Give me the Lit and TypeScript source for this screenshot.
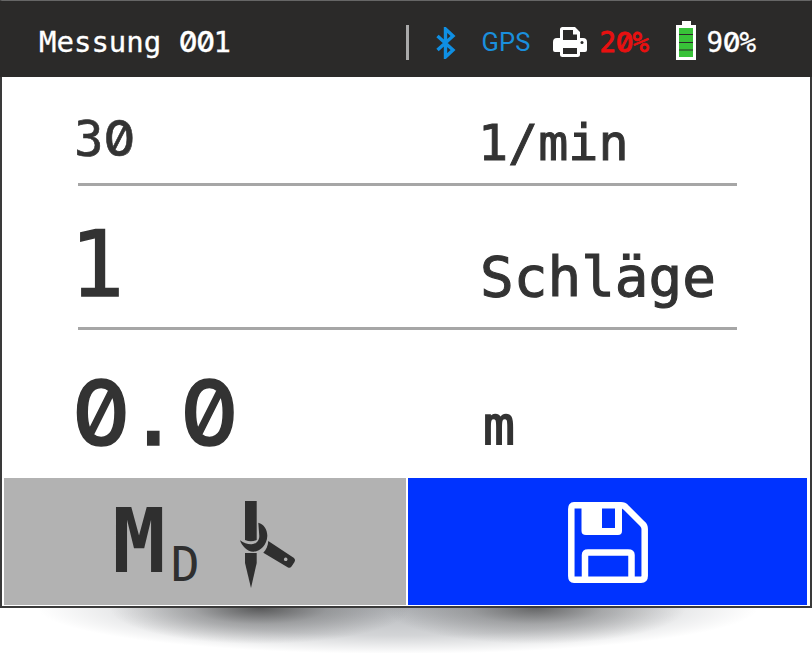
import { LitElement, html, css, svg } from "lit";
import { customElement } from "lit/decorators.js";

const bluetooth = svg`<svg class="bt" width="22" height="32" viewBox="0 0 22 32"><path d="M2.5 9 L18 23 L10.500 30 V2 L18 9 L2.500 23" fill="none" stroke="#0f8fe3" stroke-width="3.4"/></svg>`;

const printer = svg`<svg class="pr" width="34" height="30" viewBox="0 0 34 30">
<path fill-rule="evenodd" fill="#fff" d="M7 2.5 A2.5 2.5 0 0 1 9.5 0 H22 L27 5 V11 H30 A4 4 0 0 1 34 15 V23 A2 2 0 0 1 32 25 H27 V27.5 A2.5 2.5 0 0 1 24.5 30 H9.5 A2.5 2.5 0 0 1 7 27.5 V25 H2 A2 2 0 0 1 0 23 V15 A4 4 0 0 1 4 11 H7 Z M10 3 V13 H24 V7.5 H20 V3 Z M10 21 V27 H24 V21 Z"/>
<circle cx="29" cy="15.5" r="1.5" fill="#2b2a29"/></svg>`;

const battery = svg`<svg class="bat" width="20" height="39" viewBox="0 0 20 39">
<path fill="#fff" d="M6 0 H15 V4 H20 V39 H0 V4 H6 Z"/>
<rect x="3" y="7" width="14" height="29" fill="#2b2a29"/>
<rect x="3" y="7" width="14" height="6" fill="#38c238"/>
<rect x="3" y="14" width="14" height="7" fill="#38c238"/>
<rect x="3" y="22" width="14" height="6.5" fill="#38c238"/>
<rect x="3" y="29.5" width="14" height="6.5" fill="#38c238"/></svg>`;

const needle = svg`<svg class="ndl" width="60" height="90" viewBox="0 0 60 90">
<g fill="#2f2f2f">
<path d="M7 2 H18.700 V41 Q13 43.500 7 41 Z"/>
<path d="M7 54 H18.700 V64 L13 89 L7 64 Z"/>
<path d="M20.300 23.700 C26 25 29.500 31 29.300 37 C29 46 22 52.700 15.300 52.700 C9 52.700 4 47 2 41.300 C6 44.500 10 45.500 13.700 45.300 C18 45 21.300 42 21.300 37 Z"/>
<path fill-rule="evenodd" d="M30.300 42 L56 59 Q58 61 56.500 63 L53.500 67.500 Q52 69.500 50 68.500 L25.300 53.700 C28 51 30 47 30.300 42 Z M47.700 58.500 a1.800 1.800 0 1 0 0.010 0 Z"/>
</g></svg>`;

const save = svg`<svg class="sv" width="80" height="81" viewBox="0 0 80 81">
<path fill="none" stroke="#fff" stroke-width="6.5" stroke-linejoin="round" d="M6 3.3 H53 Q56 3.3 58 5.5 L74.5 22 Q76.7 24 76.7 27 V74 Q76.7 77.7 73 77.7 H6 Q3.3 77.7 3.3 74 V7 Q3.3 3.3 6 3.3 Z"/>
<path fill="#fff" fill-rule="evenodd" d="M13.5 5 H54 V29 Q54 33 50 33 H18 Q13.5 33 13.5 29 Z M34 6 V26 H47 V6 Z"/>
<path fill="none" stroke="#fff" stroke-width="6.5" d="M17 76 V53 Q17 50.500 20 50.500 H60 Q63.500 50.500 63.500 53 V76"/>
</svg>`;

const digits = (s: string) =>
  [...s].map((c) => (c === "0" ? html`<span class="z">0</span>` : c));

@customElement("app-root")
export class AppRoot extends LitElement {
  static styles = css`
    :host { display: block; width: 812px; height: 653px; overflow: hidden; background: #fff; font-family: "DejaVu Sans Mono", monospace; color: #333; }
    .z { display: inline-block; width: 0.602em; text-align: center; font-family: Inter, sans-serif; font-weight: 500; font-feature-settings: "zero", "tnum"; }
    .frame { width: 812px; height: 608px; box-sizing: border-box; border: 2px solid #3a3a3a; border-top: 1px solid #666; display: flex; flex-direction: column; background: #fff; }
    .head { height: 76px; background: #2b2a29; margin: 0 -2px; display: flex; align-items: center; color: #fff; flex: none; }
    .title { font-size: 29px; margin-left: 39px; width: 366px; white-space: pre; -webkit-text-stroke: 0.3px #fff; position: relative; top: 2px; }
    .sep { width: 2.500px; height: 35px; background: #aaa; margin-left: 1px; margin-top: 7px; }
    .bt { margin-left: 26px; margin-top: 7px; }
    .gps { font-family: Roboto, sans-serif; font-size: 25.500px; color: #1a8fdc; margin-left: 25px; width: 45px; letter-spacing: 0.200px; margin-top: 6px; }
    .pr { margin-left: 26px; margin-top: 5px; }
    .pct { font-size: 27.500px; letter-spacing: -0.200px; margin-top: 6px; }
    .red { color: #e81010; -webkit-text-stroke: 0.8px #e81010; margin-left: 13px; width: 76px; }
    .bat { margin-top: 2px; }
    .pct.white { margin-left: 11px; -webkit-text-stroke: 0.3px #fff; }
    .main { flex: 1; display: flex; flex-direction: column; padding: 0 73px 0 76px; }
    .row { display: grid; grid-template-columns: 405px 1fr; align-items: end; box-sizing: border-box; border-bottom: 3px solid #a6a6a6; white-space: pre; }
    .r1 { height: 109px; } .r2 { height: 144px; } .r3 { height: 148px; border-bottom: none; }
    .v1 { font-size: 49px; line-height: 50px; margin: 0 0 18px -4px; -webkit-text-stroke: 0.6px #333; }
    .u1 { font-size: 50px; line-height: 50px; margin: 0 0 15px -5px; -webkit-text-stroke: 1px #333; }
    .v2 { font-size: 90px; line-height: 100px; margin: 0 0 12px -8px; -webkit-text-stroke: 1.500px #333; }
    .u2 { font-size: 56px; line-height: 60px; margin: 0 0 20px -3px; -webkit-text-stroke: 1.100px #333; }
    .r3 .v2 { margin: 0 0 14px -6px; }
    .r3 .u2 { margin: 0 0 22px 0; font-size: 53px; -webkit-text-stroke: 1.500px #333; }
    .foot { flex: 1; display: grid; grid-template-columns: 402px 1fr; gap: 2px; padding: 0 3px 1px 2px; }
    .btn { display: flex; align-items: center; justify-content: center; }
    .gray { background: #b2b2b2; color: #2f2f2f; gap: 40px; }
    .blue { background: #0033ff; }
    .md { font-weight: 700; font-size: 89px; line-height: 1; display: flex; align-items: baseline; }
    .md sub { font-weight: 400; font-size: 48px; vertical-align: baseline; position: relative; top: 9px; margin-left: 5px; }
    .ndl { display: block; margin-top: 4px; margin-left: -2px; }
    .sv { display: block; margin-top: 2px; }
    .needle { display: flex; }
    .shadow { height: 45px; background:
      radial-gradient(ellipse 150px 36px at 32% 0, rgba(40,40,40,.7), rgba(40,40,40,.28) 45%, rgba(40,40,40,0) 100%),
      radial-gradient(ellipse 150px 36px at 66% 0, rgba(40,40,40,.62), rgba(40,40,40,.25) 45%, rgba(40,40,40,0) 100%),
      radial-gradient(ellipse 360px 46px at 49% 0, rgba(110,115,122,.5), rgba(110,115,122,.3) 60%, rgba(110,115,122,0) 100%);
    }
  `;
  render() {
    return html`
      <div class="frame">
        <div class="head">
          <span class="title">Messung ${digits("001")}</span>
          <span class="sep"></span>
          ${bluetooth}
          <span class="gps">GPS</span>
          ${printer}
          <span class="pct red">${digits("20%")}</span>
          ${battery}
          <span class="pct white">${digits("90%")}</span>
        </div>
        <div class="main">
          <div class="row r1"><span class="v1">${digits("30")}</span><span class="u1">1/min</span></div>
          <div class="row r2"><span class="v2">1</span><span class="u2">Schläge</span></div>
          <div class="row r3"><span class="v2">${digits("0.0")}</span><span class="u2">m</span></div>
        </div>
        <div class="foot">
          <div class="btn gray"><span class="md">M<sub>D</sub></span><span class="needle">${needle}</span></div>
          <div class="btn blue">${save}</div>
        </div>
      </div>
      <div class="shadow"></div>
    `;
  }
}
